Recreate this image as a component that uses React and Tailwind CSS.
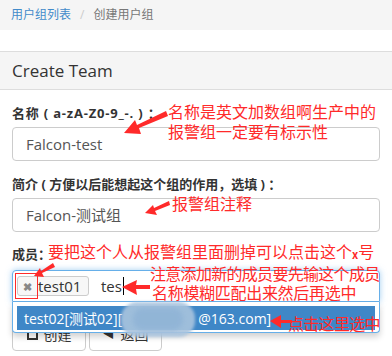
import React from "react";

const SANS = { fontFamily: '"Open Sans", "Noto Sans CJK SC", sans-serif' };
const CJK = { fontFamily: '"Noto Sans CJK SC", sans-serif' };

function Arrows() {
  return (
    <svg className="absolute inset-0 pointer-events-none" width="392" height="356" viewBox="0 0 392 356">
      <polygon points="166,111 168,116 139,128 141,134 124,133 135,120 137,125" fill="#ff2a2a" />
      <polygon points="169,201 170,205 155,211 157,215 145,213 153,205 154,208" fill="#ff2a2a" />
      <polygon points="53,263 55,267 42,273 44,277 34,276 40,268 41,271" fill="#ff2a2a" />
      <polygon points="150,285 150,289 136,289 137,295 122,287 137,280 136,285" fill="#ff2a2a" />
      <polygon points="292,320 292,323 281,323 281,328 270,321 281,315 281,320" fill="#ff2a2a" />
      <rect x="15.5" y="273.5" width="22" height="25" fill="none" stroke="#ff2a2a" strokeWidth="1" />
    </svg>
  );
}

export default function App() {
  return (
    <div className="relative w-[392px] h-[356px] overflow-hidden bg-white" style={SANS}>
      {/* breadcrumb */}
      <div className="h-[30px] bg-[#f5f5f5] flex items-center pl-[11px] text-[12px]">
        <span className="text-[#428bca]">用户组列表</span>
        <span className="text-[#ccc] px-[9px]">/</span>
        <span className="text-[#777]">创建用户组</span>
      </div>

      {/* panel */}
      <div className="mt-[21px] border-t border-[#ddd]">
        <div className="h-[38px] bg-[#f5f5f5] border-b border-[#ddd] flex items-center pl-[12px] text-[17px] text-[#333]">
          Create Team
        </div>
        <div className="px-[12px] pt-[14px]">
          <div className="text-[13px] font-bold text-[#333] leading-[18px] tracking-[0.8px] whitespace-pre">名称 ( a-zA-Z0-9_-. ) ：</div>
          <div className="mt-[5px] w-[368px] h-[34px] border border-[#ccc] rounded-[4px] flex items-center pl-[13px] text-[15px] text-[#555]">
            Falcon-test
          </div>

          <div className="mt-[14px] text-[13px] font-bold text-[#333] leading-[18px] whitespace-pre">简介 ( 方便以后能想起这个组的作用，选填 ) ：</div>
          <div className="mt-[5px] w-[368px] h-[34px] border border-[#ccc] rounded-[4px] flex items-center pl-[13px] text-[15px] text-[#555]">
            Falcon-测试组
          </div>

          <div className="mt-[13px] text-[13px] font-bold text-[#333] leading-[18px]">成员：</div>

          {/* member select */}
          <div className="relative mt-[7px] w-[368px]">
            <div className="h-[32px] border border-[#66afe9] rounded-t-[4px] flex items-center pl-[4px] bg-white shadow-[0_0_6px_rgba(102,175,233,0.6)]">
              <div className="h-[20px] w-[72px] border border-[#ccc] rounded-[3px] bg-[#f7f7f7] flex items-center">
                <span className="w-[18px] text-center text-[11px] font-bold text-[#888] leading-none">✖</span>
                <span className="text-[15px] text-[#333] ml-[2px]">test01</span>
              </div>
              <span className="ml-[12px] text-[15px] text-[#333]">tes</span>
              <span className="w-px h-[18px] bg-black ml-[1px]"></span>
            </div>
            <div className="absolute left-0 top-[32px] w-[368px] h-[31px] bg-white border-x border-b border-[#66afe9] rounded-b-[4px] shadow-[0_4px_6px_rgba(0,0,0,0.18)] z-10 px-[4px] pt-[4px]">
              <div className="relative h-[24px] bg-[#3f87c7] text-white text-[14px] flex items-center pl-[7px]">
                <span>test02[测试02][</span>
                <span className="w-[76px] shrink-0"></span>
                <span>@163.com]</span>
                <div className="absolute left-[104px] top-[-4px] w-[74px] h-[35px] rounded-[16px] bg-[#a9c4de] blur-[1.5px] opacity-90"></div>
                <div className="absolute left-[116px] top-[2px] w-[50px] h-[22px] rounded-[10px] bg-[#8fb3d6] blur-[2px] opacity-80"></div>
              </div>
            </div>
          </div>

          {/* buttons */}
          <div className="mt-[15px] flex gap-[3px]">
            <div className="w-[74px] h-[34px] border border-[#ccc] rounded-[4px] flex items-center justify-center gap-[6px] text-[14px] text-[#333]">
              <span className="w-[11px] h-[11px] border-2 border-[#333]"></span>
              <span>创建</span>
            </div>
            <div className="w-[73px] h-[34px] border border-[#ccc] rounded-[4px] flex items-center justify-center gap-[6px] text-[14px] text-[#333]">
              <span className="text-[12px]">◀</span>
              <span>返回</span>
            </div>
          </div>
        </div>
      </div>

      {/* annotations */}
      <div className="absolute inset-0 pointer-events-none text-[#ff2a2a] z-20" style={CJK}>
        <div className="absolute left-[168px] top-[101px] text-[16px] leading-[20px] whitespace-nowrap">
          <div>名称是英文加数组啊生产中的</div>
          <div>报警组一定要有标示性</div>
        </div>
        <div className="absolute left-[172px] top-[193px] text-[16px] leading-[20px] whitespace-nowrap">报警组注释</div>
        <div className="absolute left-[48px] top-[241px] text-[16px] leading-[20px] whitespace-nowrap">
          要把这个人从报警组里面删掉可以点击这个<span className="text-[11px] font-bold align-middle">x</span>号
        </div>
        <div className="absolute left-[150px] top-[264px] text-[16px] leading-[19px] whitespace-nowrap">
          <div className="tracking-[-0.7px]">注意添加新的成员要先输这个成员</div>
          <div className="ml-[2px] tracking-[-0.3px]">名称模糊匹配出来然后再选中</div>
        </div>
        <div className="absolute left-[288px] top-[313px] text-[16px] leading-[20px] whitespace-nowrap tracking-[-0.7px]">点击这里选中</div>
      </div>
      <div className="absolute inset-0 z-30 pointer-events-none">
        <Arrows />
      </div>
    </div>
  );
}
